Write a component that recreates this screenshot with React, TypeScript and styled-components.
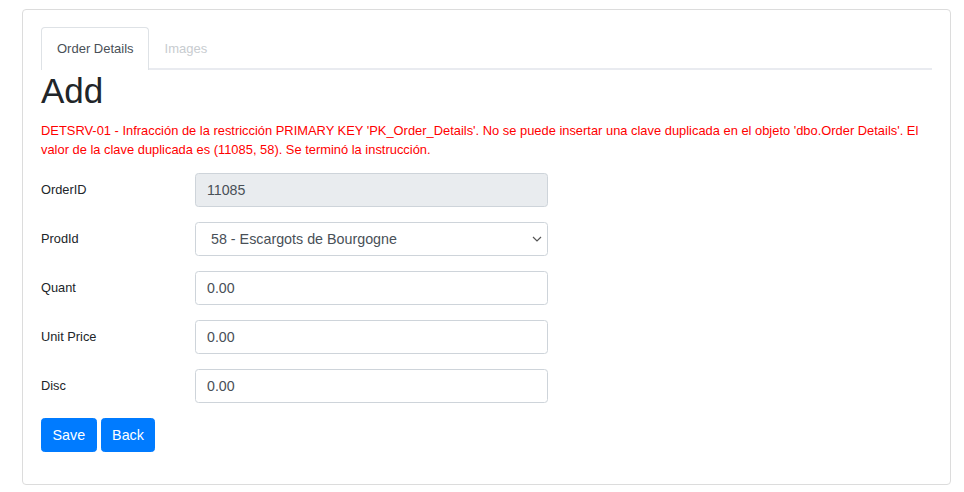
import styled, { createGlobalStyle } from "styled-components";

const GlobalStyle = createGlobalStyle`
  body {
    margin: 0;
    background: #fff;
    font-family: "Liberation Sans", Arial, sans-serif;
    color: #212529;
  }
  * { box-sizing: border-box; }
`

const Page = styled.div`
  padding: 9px 13px 8px 22px;
`

const Card = styled.div`
  width: 929px;
  border: 1px solid #dcdcdc;
  border-radius: 4px;
  padding: 17px 18px 16px;
`

const Tabs = styled.ul`
  display: flex;
  list-style: none;
  margin: 0;
  padding: 0;
  border-bottom: 2px solid #e9ebf0;
`

const Tab = styled.li<{ $active?: boolean }>`
  font-size: 13px;
  line-height: 19px;
  padding: 11px 14px 12px 15px;
  margin-bottom: -2px;
  border: 1px solid ${p => (p.$active ? "#dee2e6" : "transparent")};
  border-bottom: none;
  border-radius: 4px 4px 0 0;
  background: ${p => (p.$active ? "#fff" : "transparent")};
  color: ${p => (p.$active ? "#495057" : "#c8ccd0")};
  cursor: pointer;
`

const Heading = styled.h1`
  font-size: 35px;
  font-weight: 500;
  line-height: 42px;
  margin: 0 0 9px;
`

const ErrorText = styled.p`
  color: #ff0000;
  font-size: 12.9px;
  line-height: 19px;
  margin: 0 0 14px;
`

const Row = styled.div`
  display: flex;
  align-items: flex-start;
  margin-bottom: 15px;
`

const Label = styled.label`
  width: 154px;
  flex: none;
  font-size: 12.8px;
  line-height: 19px;
  padding-top: 7px;
`

const Input = styled.input`
  width: 353px;
  height: 34px;
  padding: 0 11px;
  font-family: inherit;
  font-size: 14.2px;
  color: #495057;
  background: ${p => (p.disabled ? "#e9ecef" : "#fff")};
  border: 1px solid #ced4da;
  border-radius: 3.5px;
  outline: none;
`

const SelectWrap = styled.div`
  position: relative;
  width: 353px;
`

const Select = styled.select`
  appearance: none;
  width: 100%;
  height: 34px;
  padding: 0 28px 0 15px;
  font-family: inherit;
  font-size: 14.3px;
  color: #495057;
  background: #fff;
  border: 1px solid #ced4da;
  border-radius: 3.5px;
  outline: none;
`

const Chevron = styled.svg`
  position: absolute;
  right: 6px;
  top: 14px;
  pointer-events: none;
`

const Buttons = styled.div`
  display: flex;
  gap: 4px;
  margin-bottom: 16px;
`

const Button = styled.button`
  height: 34px;
  padding: 0 10.5px;
  font-family: inherit;
  font-size: 14.3px;
  color: #fff;
  background: #007bff;
  border: 1px solid #007bff;
  border-radius: 3.5px;
  cursor: pointer;
`

const App = () => {
  return (
    <Page>
      <GlobalStyle />
      <Card>
        <Tabs>
          <Tab $active>Order Details</Tab>
          <Tab>Images</Tab>
        </Tabs>
        <Heading>Add</Heading>
        <ErrorText>
          DETSRV-01 - Infracción de la restricción PRIMARY KEY 'PK_Order_Details'. No se puede insertar una clave
          duplicada en el objeto 'dbo.Order Details'. El valor de la clave duplicada es (11085, 58). Se terminó la
          instrucción.
        </ErrorText>
        <Row>
          <Label>OrderID</Label>
          <Input disabled defaultValue="11085" />
        </Row>
        <Row>
          <Label>ProdId</Label>
          <SelectWrap>
            <Select defaultValue="58">
              <option value="58">58 - Escargots de Bourgogne</option>
            </Select>
            <Chevron width="10" height="6" viewBox="0 0 10 6">
              <polyline points="1,1 5,5 9,1" fill="none" stroke="#555" strokeWidth="1.2" />
            </Chevron>
          </SelectWrap>
        </Row>
        <Row>
          <Label>Quant</Label>
          <Input defaultValue="0.00" />
        </Row>
        <Row>
          <Label>Unit Price</Label>
          <Input defaultValue="0.00" />
        </Row>
        <Row>
          <Label>Disc</Label>
          <Input defaultValue="0.00" />
        </Row>
        <Buttons>
          <Button>Save</Button>
          <Button>Back</Button>
        </Buttons>
      </Card>
    </Page>
  );
};

export default App;
